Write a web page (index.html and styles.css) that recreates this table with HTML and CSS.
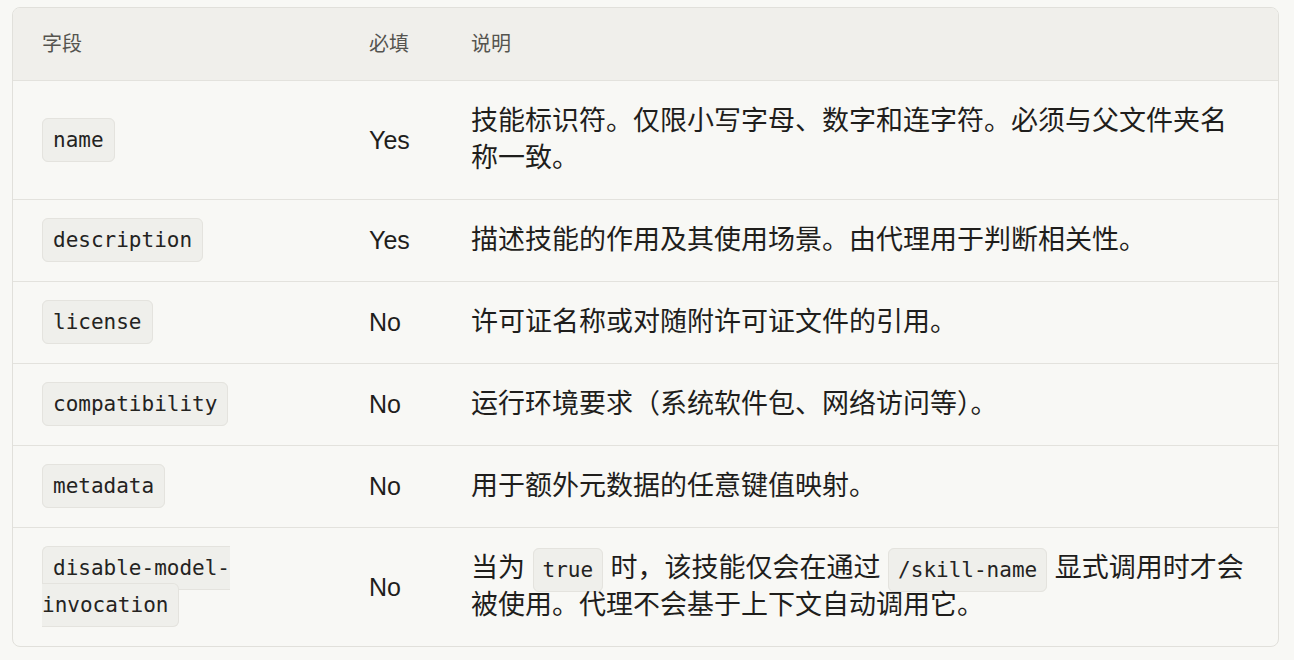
FILE: index.html
```html
<!DOCTYPE html>
<html lang="zh-CN">
<head>
<meta charset="utf-8">
<title>字段</title>
<link rel="stylesheet" href="styles.css">
</head>
<body>
<div class="tbl-wrap">
  <table class="fields">
    <colgroup>
      <col class="c-field">
      <col class="c-req">
      <col class="c-desc">
    </colgroup>
    <thead>
      <tr>
        <th>字段</th>
        <th>必填</th>
        <th>说明</th>
      </tr>
    </thead>
    <tbody>
      <tr>
        <td class="field"><code>name</code></td>
        <td class="req">Yes</td>
        <td class="desc">技能标识符。仅限小写字母、数字和连字符。必须与父文件夹名称一致。</td>
      </tr>
      <tr>
        <td class="field"><code>description</code></td>
        <td class="req">Yes</td>
        <td class="desc">描述技能的作用及其使用场景。由代理用于判断相关性。</td>
      </tr>
      <tr>
        <td class="field"><code>license</code></td>
        <td class="req">No</td>
        <td class="desc">许可证名称或对随附许可证文件的引用。</td>
      </tr>
      <tr>
        <td class="field"><code>compatibility</code></td>
        <td class="req">No</td>
        <td class="desc">运行环境要求（系统软件包、网络访问等）。</td>
      </tr>
      <tr>
        <td class="field"><code>metadata</code></td>
        <td class="req">No</td>
        <td class="desc">用于额外元数据的任意键值映射。</td>
      </tr>
      <tr>
        <td class="field"><code>disable-model-invocation</code></td>
        <td class="req">No</td>
        <td class="desc">当为 <code>true</code> 时，该技能仅会在通过 <code>/skill-name</code> 显式调用时才会被使用。代理不会基于上下文自动调用它。</td>
      </tr>
    </tbody>
  </table>
</div>
</body>
</html>
```

FILE: styles.css
```css
html, body {
  background: #f8f8f5;
}

body {
  margin: 0;
  padding: 7px 15px 0 12px;
  font-family: "Liberation Sans", "Noto Sans CJK SC", sans-serif;
  color: #1f1e1c;
}

.tbl-wrap {
  border: 1px solid #e1e0db;
  border-radius: 8px;
  overflow: hidden;
  background: #f8f8f5;
}

.fields {
  width: 100%;
  border-collapse: collapse;
  table-layout: fixed;
}

.c-field { width: 327px; }
.c-req { width: 102px; }

.fields th {
  background: #f0efeb;
  font-weight: 400;
  font-size: 20px;
  line-height: 24px;
  color: #55544f;
  text-align: left;
  padding: 24px 30px 24px 29px;
  border-bottom: 1px solid #e3e2dd;
}

.fields td {
  padding: 22px 30px 22px 29px;
  vertical-align: middle;
  border-top: 1px solid #e3e2dd;
}

.fields tbody tr:first-child td {
  border-top: none;
}

.field {
  font-family: "DejaVu Sans Mono", monospace;
  font-size: 21px;
  line-height: 37px;
}

.req {
  font-size: 25px;
  line-height: 37px;
}

.desc {
  font-size: 27px;
  line-height: 37px;
}

code {
  font-family: "DejaVu Sans Mono", monospace;
  font-size: 21px;
  line-height: 1;
  color: #24231f;
  background: #efefeb;
  border: 1px solid #e4e3de;
  border-radius: 6px;
  padding: 9px 10px;
}

.desc code {
  padding: 9px 9px;
}
```
